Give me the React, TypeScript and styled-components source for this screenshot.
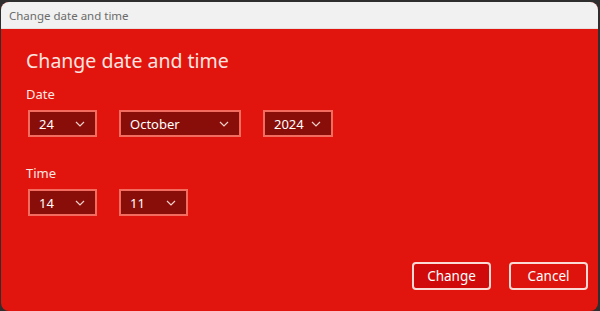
import React from 'react';
import styled, { createGlobalStyle } from 'styled-components';

const GlobalStyle = createGlobalStyle`
  html, body {
    margin: 0;
    padding: 0;
    background: #2e2e2e;
    font-family: "Noto Sans", "Open Sans", sans-serif;
  }
`;

const Desktop = styled.div`
  width: 600px;
  height: 311px;
  padding: 2px 2px 0 1px;
  box-sizing: border-box;
  display: flex;
`;

const Window = styled.div`
  flex: 1;
  display: flex;
  flex-direction: column;
  border-radius: 8px;
  overflow: hidden;
  background: #e1150d;
`;

const TitleBar = styled.div`
  height: 26px;
  flex-shrink: 0;
  background: #f1f1f1;
  border-bottom: 1px solid #e6e0de;
  display: flex;
  align-items: center;
  padding-left: 8px;
  font-size: 11.5px;
  color: #6b6b6b;
`;

const Body = styled.div`
  flex: 1;
  display: flex;
  flex-direction: column;
  padding: 18px 10px 21px 25px;
  color: #fff;
`;

const Heading = styled.h1`
  margin: 0 0 11px;
  font-weight: 400;
  font-size: 19.5px;
  color: #fde4e0;
`;

const Label = styled.div`
  font-size: 13px;
  margin-bottom: 7px;
  color: #fde8e4;
`;

const Row = styled.div<{ $gap: number }>`
  display: flex;
  gap: ${(p) => p.$gap}px;
  margin-left: 2px;
  margin-bottom: 27px;
`;

const Select = styled.div<{ $w: number }>`
  width: ${(p) => p.$w}px;
  height: 27px;
  box-sizing: border-box;
  border: 2px solid #f26d60;
  background: #890e09;
  display: flex;
  align-items: center;
  justify-content: space-between;
  padding: 0 10px 0 9px;
  font-size: 13px;
  color: #fff;
`;

const Footer = styled.div`
  margin-top: auto;
  display: flex;
  justify-content: flex-end;
  gap: 18px;
`;

const Button = styled.button<{ $primary?: boolean }>`
  width: 79px;
  height: 28px;
  border: 2px solid #fbd9d4;
  border-radius: 4px;
  background: ${(p) => (p.$primary ? '#d0090b' : '#de130d')};
  color: #fff;
  font-family: inherit;
  font-size: 13.5px;
  padding: 0;
`;

const Chevron = () => (
  <svg width="10" height="6" viewBox="0 0 10 6" fill="none">
    <path d="M1 1l4 4 4-4" stroke="#f7cfc9" strokeWidth="1.2" />
  </svg>
);

const Dropdown = ({ value, width }: { value: string; width: number }) => (
  <Select $w={width}>
    <span>{value}</span>
    <Chevron />
  </Select>
);

export default function App() {
  return (
    <>
      <GlobalStyle />
      <Desktop>
        <Window>
          <TitleBar>Change date and time</TitleBar>
          <Body>
            <Heading>Change date and time</Heading>
            <Label>Date</Label>
            <Row $gap={22}>
              <Dropdown value="24" width={69} />
              <Dropdown value="October" width={122} />
              <Dropdown value="2024" width={70} />
            </Row>
            <Label>Time</Label>
            <Row $gap={22}>
              <Dropdown value="14" width={69} />
              <Dropdown value="11" width={69} />
            </Row>
            <Footer>
              <Button $primary>Change</Button>
              <Button>Cancel</Button>
            </Footer>
          </Body>
        </Window>
      </Desktop>
    </>
  );
}
